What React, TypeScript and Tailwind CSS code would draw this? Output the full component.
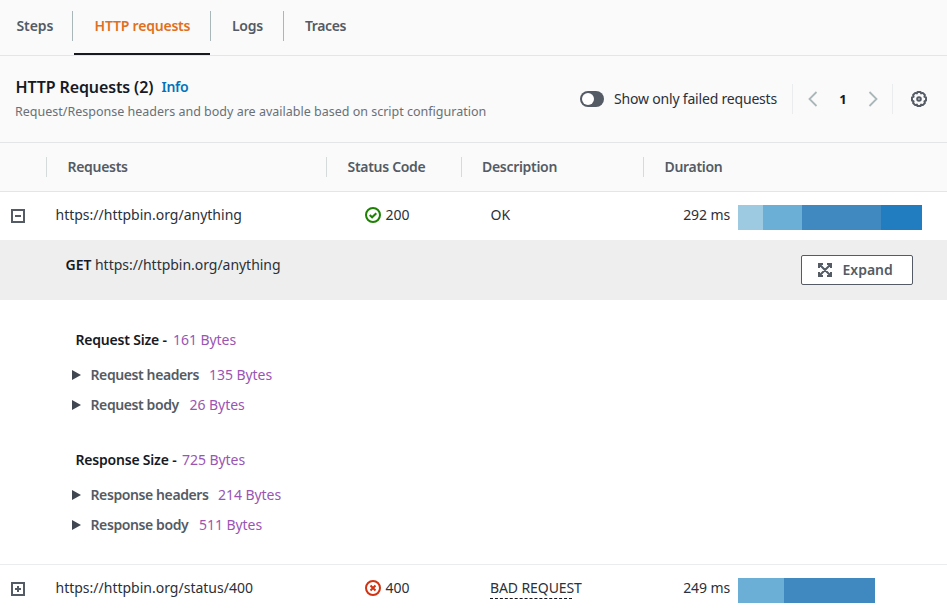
import type { ReactNode } from "react";

function Tab({ children, className }: { children: ReactNode; className: string }) {
  return (
    <div className={`relative flex h-full items-start pt-4 font-semibold whitespace-nowrap ${className}`}>{children}</div>
  );
}

function TabDivider() {
  return <div className="mt-[11px] h-[30px] w-px shrink-0 bg-[#aab7b8]" />;
}

function ColumnHeader({ children, className }: { children?: ReactNode; className: string }) {
  return (
    <div className={`flex h-5 items-center font-semibold whitespace-nowrap ${className}`}>{children}</div>
  );
}

function ToggleBox({ open }: { open: boolean }) {
  return (
    <svg width="14" height="14" viewBox="0 0 14 14" fill="none" stroke="#545b64" strokeWidth="2">
      <path d="M1 1h12v12H1zM4 7h6" />
      {!open && <path d="M7 4v6" />}
    </svg>
  );
}

function StatusIcon({ ok }: { ok: boolean }) {
  return (
    <svg width="16" height="16" viewBox="0 0 16 16" fill="none" stroke={ok ? "#1d8102" : "#d13212"} strokeWidth="2">
      <circle cx="8" cy="8" r="7" />
      {ok ? <path d="M4.7 8l2.400 2.300 4.200-4.100" /> : <path d="M5.500 5.500l5 5M10.500 5.500l-5 5" />}
    </svg>
  );
}

interface Segment {
  className: string;
}

interface RequestRowProps {
  url: string;
  open: boolean;
  ok: boolean;
  code: string;
  description: ReactNode;
  duration: string;
  segments: Segment[];
  className: string;
}

function RequestRow({ url, open, ok, code, description, duration, segments, className }: RequestRowProps) {
  return (
    <div className={`flex items-start bg-white ${className}`}>
      <div className="mt-[4px] ml-[11px] w-11 shrink-0">
        <ToggleBox open={open} />
      </div>
      <div className="w-[310px] shrink-0 pl-[0.5px]">{url}</div>
      <div className="flex w-[125px] shrink-0 gap-1">
        <span className="mt-[2px]">
          <StatusIcon ok={ok} />
        </span>
        <span className="pl-[0.5px]">{code}</span>
      </div>
      <div className="w-[170px] shrink-0">{description}</div>
      <div className="w-[70px] shrink-0 text-right tracking-[-0.1px] whitespace-nowrap">{duration}</div>
      <div className="ml-2 flex">
        {segments.map((segment) => (
          <div key={segment.className} className={`h-[25px] ${segment.className}`} />
        ))}
      </div>
    </div>
  );
}

function SizeLine({ label, size, labelClass }: { label: string; size: string; labelClass: string }) {
  return (
    <div className="flex h-[30px] items-center">
      <svg width="9" height="10" viewBox="0 0 9 10" className="mr-[9.5px]" fill="#414750">
        <path d="M0 0l9 5-9 5z" />
      </svg>
      <span className={`shrink-0 tracking-[-0.4px] whitespace-nowrap font-semibold text-[#545b64] ${labelClass}`}>{label}</span>
      <span className="text-[#9a55b3] tracking-[-0.05px]">{size}</span>
    </div>
  );
}

function SizeTitle({ label, size, labelClass }: { label: string; size: string; labelClass: string }) {
  return (
    <div className="mb-[10px] ml-[3.5px] flex h-[30px] items-center">
      <span className={`shrink-0 tracking-[-0.2px] whitespace-nowrap font-semibold text-[#16191f] ${labelClass}`}>{label}</span>
      <span className="text-[#9a55b3] tracking-[-0.05px]">{size}</span>
    </div>
  );
}

export default function App() {
  return (
    <div className="h-[615px] w-[947px] overflow-hidden bg-white font-['Noto_Sans',sans-serif] text-[14px] leading-5 text-[#2b3039]">
      <nav className="flex h-14 items-start border-b border-[#e3e6e6] bg-[#fafafa] text-[#545b64]">
        <Tab className="w-[72px] pl-[16.5px] tracking-[-0.1px]">Steps</Tab>
        <TabDivider />
        <Tab className="w-[137px] pl-[21.5px] tracking-[-0.2px] text-[#e07020]">
          HTTP requests
          <span className="absolute bottom-0 left-px h-[2px] w-[136px] bg-[#16191f]" />
        </Tab>
        <TabDivider />
        <Tab className="w-[72px] pl-[21px] tracking-[-0.3px]">Logs</Tab>
        <TabDivider />
        <Tab className="pl-[21px] tracking-[-0.4px]">Traces</Tab>
      </nav>

      <header className="flex h-[87px] items-start justify-between border-b border-[#e3e6e6] bg-[#fafafa] pl-[15px]">
        <div className="pt-5">
          <h2 className="flex items-center leading-[22px]">
            <span className="w-[146.5px] pl-[0.5px] tracking-[-0.12px] whitespace-nowrap text-[16px] font-semibold text-[#16191f]">HTTP Requests (2)</span>
            <span className="text-[14px] tracking-[-0.3px] font-semibold text-[#0073bb]">Info</span>
          </h2>
          <p className="mt-[5px] text-[12.5px] leading-[18px] text-[#687078]">
            Request/Response headers and body are available based on script configuration
          </p>
        </div>
        <div className="mt-7 flex h-[30px] w-[367px] items-center">
          <span className="flex h-4 w-6 shrink-0 items-center rounded-full bg-[#545b64] pl-[2px]">
            <span className="h-3 w-3 rounded-full bg-white" />
          </span>
          <span className="ml-[10px] w-[178px] shrink-0 tracking-[-0.19px] whitespace-nowrap">Show only failed requests</span>
          <span className="h-[30px] w-px shrink-0 bg-[#eaeded]" />
          <svg width="10" height="16" viewBox="0 0 10 16" className="ml-[15px] shrink-0" fill="none" stroke="#aab7b8" strokeWidth="1.8">
            <path d="M8.500 1l-7 7 7 7" />
          </svg>
          <span className="w-[50px] shrink-0 text-center text-[13px] font-bold text-[#16191f]">1</span>
          <svg width="10" height="16" viewBox="0 0 10 16" className="shrink-0" fill="none" stroke="#aab7b8" strokeWidth="1.8">
            <path d="M1.500 1l7 7-7 7" />
          </svg>
          <span className="ml-[14px] h-[30px] w-px shrink-0 bg-[#eaeded]" />
          <svg width="16" height="16" viewBox="0 0 16 16" className="ml-[18px] shrink-0" fill="none" stroke="#545b64" strokeWidth="2" strokeLinejoin="round">
            <path d="M6.500 1h3l.6 1.400 1.700-.5 2.100 2.100-.5 1.700 1.600.8v3l-1.600.8.5 1.700-2.100 2.100-1.700-.5L9.500 15h-3l-.6-1.400-1.700.5-2.100-2.100.5-1.700L1 9.500v-3l1.600-.8L2.100 4l2.100-2.100 1.700.5z" />
            <circle cx="8" cy="8" r="1.800" />
          </svg>
        </div>
      </header>

      <div className="flex h-[49px] items-start border-b border-[#e3e6e6] bg-[#fafafa] pt-[14px] tracking-[-0.3px] text-[#545b64]">
        <ColumnHeader className="w-[46px]" />
        <ColumnHeader className="w-[280px] border-l border-[#d5dbdb] pl-[20.5px]">Requests</ColumnHeader>
        <ColumnHeader className="w-[135px] border-l border-[#d5dbdb] pl-[20.5px]">Status Code</ColumnHeader>
        <ColumnHeader className="w-[182px] border-l border-[#d5dbdb] pl-5">Description</ColumnHeader>
        <ColumnHeader className="border-l border-[#d5dbdb] pl-[20.5px]">Duration</ColumnHeader>
      </div>

      <RequestRow
        className="h-12 pt-[13px]"
        url="https://httpbin.org/anything"
        open
        ok
        code="200"
        description={<span className="pl-[0.5px]">OK</span>}
        duration="292 ms"
        segments={[
          { className: "w-[25px] bg-[#9ecae1]" },
          { className: "w-[39px] bg-[#6baed6]" },
          { className: "w-[79px] bg-[#4089c0]" },
          { className: "w-[41px] bg-[#227dc0]" },
        ]}
      />

      <div className="flex h-[60px] items-start justify-between bg-[#eeeeee] pt-[15px] pr-[34px] pl-[65.5px]">
        <div className="tracking-[-0.03px]">
          <b className="font-semibold text-[#16191f]">GET</b> <span>https://httpbin.org/anything</span>
        </div>
        <button className="flex h-[30px] w-[112px] items-center rounded-[2px] border border-[#545b64] bg-white pl-4 font-semibold text-[#545b64]">
          <svg width="14" height="14" viewBox="0 0 14 14" className="mr-[10.5px]" fill="none" stroke="#545b64" strokeWidth="2">
            <path d="M1 5V1h4M9 1h4v4M13 9v4H9M5 13H1V9M1 1l12 12M13 1L1 13" />
          </svg>
          Expand
        </button>
      </div>

      <section className="h-[265px] border-b border-[#eaeded] bg-white pt-[25px] pl-[72px]">
        <SizeTitle label="Request Size -" size="161 Bytes" labelClass="w-[97.5px]" />
        <div className="-mt-[5px]">
          <SizeLine label="Request headers" size="135 Bytes" labelClass="w-[118.5px]" />
          <SizeLine label="Request body" size="26 Bytes" labelClass="w-[99px]" />
        </div>
        <div className="h-[25px]" />
        <SizeTitle label="Response Size -" size="725 Bytes" labelClass="w-[106.5px]" />
        <div className="-mt-[5px]">
          <SizeLine label="Response headers" size="214 Bytes" labelClass="w-[127.5px]" />
          <SizeLine label="Response body" size="511 Bytes" labelClass="w-[108.5px]" />
        </div>
      </section>

      <RequestRow
        className="h-[50px] pt-[13px]"
        url="https://httpbin.org/status/400"
        open={false}
        ok={false}
        code="400"
        description={
          <span className="block w-[82px] border-b border-dashed border-[#16191f] leading-5 tracking-[-0.1px] whitespace-nowrap">
            BAD REQUEST
          </span>
        }
        duration="249 ms"
        segments={[{ className: "w-[46px] bg-[#6baed6]" }, { className: "w-[91px] bg-[#4089c0]" }]}
      />
    </div>
  );
}
